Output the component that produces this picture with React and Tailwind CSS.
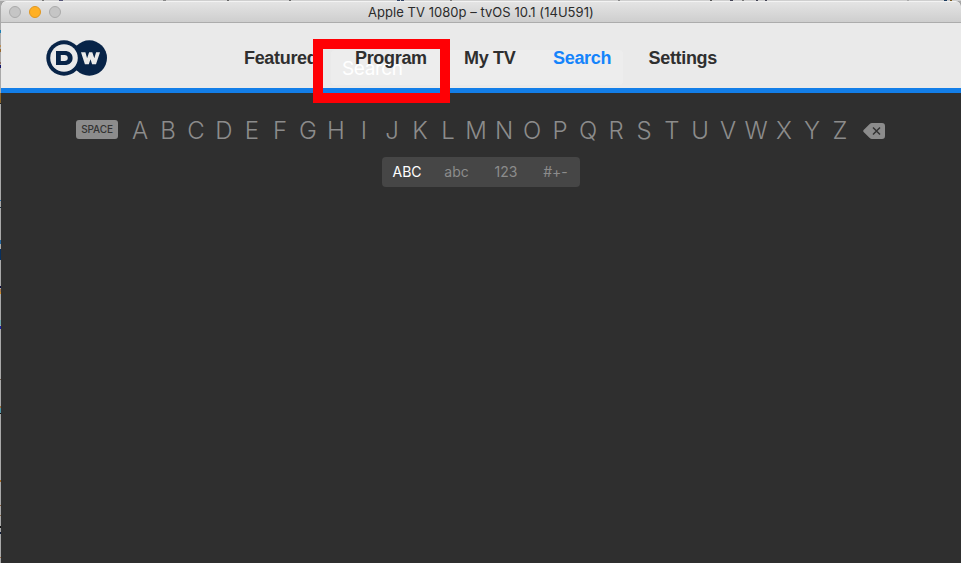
import React from 'react';

const LETTERS = 'ABCDEFGHIJKLMNOPQRSTUVWXYZ'.split('');

// Slivers of the desktop visible to the left of the window: [top, height, colour]
const LEFT_MARKS = [
  [30, 3, '#1b7fb5'], [45, 2, '#b98d55'], [49, 3, '#9a6a30'], [62, 2, '#8a6a60'], [65, 3, '#14146b'],
  [93, 10, '#8a6428'], [103, 1, '#222222'], [200, 1, '#2f6ea8'], [207, 1, '#1c3448'], [240, 4, '#2468a0'],
  [249, 11, '#08305e'], [286, 2, '#101040'], [289, 3, '#a9784c'], [292, 2, '#c98a28'], [320, 5, '#6fa8ac'],
  [326, 3, '#1d28a8'], [379, 1, '#6b5a48'], [406, 2, '#9a7040'], [408, 5, '#4f97a8'], [413, 1, '#111111'],
  [480, 2, '#a66b25'], [505, 1, '#8a5c38'], [515, 1, '#8a6a4a'], [526, 2, '#151515'], [532, 2, '#101c38'],
  [557, 1, '#9a6a40'],
];

// Slivers above the window: [left, width, colour]
const TOP_MARKS = [
  [42, 2, '#777777'], [59, 4, '#555577'], [163, 3, '#888888'], [227, 2, '#666666'], [289, 2, '#666666'],
  [397, 3, '#334466'], [401, 3, '#334466'], [450, 2, '#777777'], [618, 2, '#888888'], [710, 2, '#555555'],
  [730, 3, '#444455'], [742, 2, '#777777'], [756, 2, '#444455'], [765, 2, '#444455'], [907, 2, '#aaaaaa'],
  [944, 3, '#1c3c60'], [950, 2, '#7a5a20'],
];

function DesktopEdges() {
  return (
    <>
      {LEFT_MARKS.map(([top, height, background]) => (
        <i key={top} className="absolute left-0 w-px" style={{ top, height, background }} />
      ))}
      {TOP_MARKS.map(([left, width, background]) => (
        <i key={left} className="absolute top-0 h-px" style={{ left, width, background }} />
      ))}
    </>
  );
}

function Logo() {
  return (
    <svg className="ml-[45px] mt-[17px] h-9 w-[62px] shrink-0" viewBox="0 0 62 36">
      <circle cx="43.3" cy="18" r="17.7" fill="#082448" />
      <circle cx="18" cy="18" r="17.7" fill="#082448" />
      <circle cx="18" cy="18" r="13.8" fill="#eaeaea" />
      <path
        fill="#082448"
        fillRule="evenodd"
        d="M10 11h8.6c5 0 8 2.700 8 7s-3 7-8 7H10zM14.800 15v6h3.600c2.200 0 3.400-1.100 3.400-3s-1.200-3-3.400-3z"
      />
      <path fill="#eaeaea" d="M35 12.300h4.400l1.700 5.900 2-5.900h3.200l2 5.900 1.800-5.900h3.900L50 24.200h-3.900l-1.600-5-1.700 5h-3.900z" />
    </svg>
  );
}

function NavItem({ children, className }) {
  return <span className={`block whitespace-nowrap ${className}`}>{children}</span>;
}

function Key({ children }) {
  return <span className="w-7 text-center">{children}</span>;
}

export default function App() {
  return (
    <div className="relative h-[563px] w-[961px] overflow-hidden bg-[#a9a9a9] pl-px pt-px font-['Inter',sans-serif]">
      <div className="absolute left-0 top-0 h-px w-full bg-[#cfcfcf]" />
      <DesktopEdges />
      <div className="relative flex h-[562px] flex-col overflow-hidden rounded-t-[5px] bg-[#2f2f2f]">
        <div className="flex h-[22px] shrink-0 items-center border-b border-[#acacac] border-t border-t-[#f3f3f3] bg-linear-to-b from-[#e4e4e4] to-[#cecece] pl-2">
          <div className="flex w-[359px] gap-2">
            <i className="size-3 rounded-full border border-[#aaaaaa] bg-[#c5c5c5]" />
            <i className="size-3 rounded-full border border-[#df9620] bg-[#ffb024]" />
            <i className="size-3 rounded-full border border-[#aaaaaa] bg-[#c5c5c5]" />
          </div>
          <span className="whitespace-nowrap text-[13px] leading-5 tracking-[0.04px] text-[#2b2b2b]">
            Apple TV 1080p – tvOS 10.1 (14U591)
          </span>
        </div>

        <header className="relative flex h-[70px] shrink-0 border-b-[5px] border-[#137ee8] bg-[#eaeaea]">
          <Logo />
          <div className="absolute left-[330px] top-[27px] h-[35px] w-[292px] rounded bg-[#ededed] pl-[11px] text-[19px] leading-[38px] tracking-[-0.4px] text-white">
            Search
          </div>
          <nav className="relative ml-[136px] mt-[24px] flex font-['Liberation_Sans',Arial,sans-serif] text-[18px] font-bold leading-[22px] tracking-[-0.32px] text-[#2f2f2f]">
            <NavItem className="w-[111px]">Featured</NavItem>
            <NavItem className="w-[109px]">Program</NavItem>
            <NavItem className="w-[89px]">My TV</NavItem>
            <NavItem className="w-[95.5px] text-[#1584fb]">Search</NavItem>
            <NavItem className="w-[80px]">Settings</NavItem>
          </nav>
        </header>

        <main className="flex flex-col items-start">
          <div className="ml-[75px] mt-[21px] flex h-8 items-center text-[#8c8c8c]">
            <span className="mb-[2px] mr-2 flex h-[19px] w-[42px] items-center justify-center rounded-[3px] bg-[#8c8c8c] text-[10px] font-medium tracking-[-0.1px] text-[#333]">
              SPACE
            </span>
            <div className="flex pt-[2px] text-[24px] font-light leading-[30px]">
              {LETTERS.map((letter) => (
                <Key key={letter}>{letter}</Key>
              ))}
            </div>
            <svg className="ml-[9px] mt-[2px] h-4 w-[22px]" viewBox="0 0 22 16">
              <path fill="#8c8c8c" d="M9 0h10a3 3 0 0 1 3 3v10a3 3 0 0 1-3 3H9Q7.700 16 6.700 15L.6 9Q-.2 8 .6 7L6.700 1Q7.700 0 9 0z" />
              <path stroke="#333" strokeWidth="1.500" d="m10 4.500 7 7m0-7-7 7" />
            </svg>
          </div>
          <div className="ml-[381px] mt-[11px] flex h-[30px] w-[198px] items-center rounded bg-[#464646] pb-[2px] text-[14px] text-[#8c8c8c]">
            <span className="w-[50px] text-center text-white">ABC</span>
            <span className="w-[49px] text-center">abc</span>
            <span className="w-[50px] text-center">123</span>
            <span className="w-[49px] text-center">#+-</span>
          </div>
        </main>
      </div>
      <div className="absolute left-[313px] top-[39px] h-16 w-[137px] border-10 border-[#ff0005]" />
    </div>
  );
}
